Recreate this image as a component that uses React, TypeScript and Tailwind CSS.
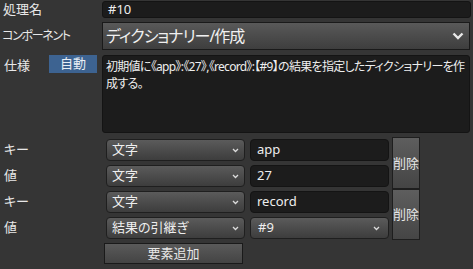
import { ReactNode } from 'react';

const font = { fontFamily: '"Noto Sans", "Noto Sans CJK JP", sans-serif' };

function Chevron({ big = false }: { big?: boolean }) {
  return big ? (
    <svg width="12" height="8" viewBox="0 0 12 8" className="shrink-0">
      <polyline points="1.5,1.5 6,6 10.5,1.5" fill="none" stroke="#e8e8e8" strokeWidth="2.4" />
    </svg>
  ) : (
    <svg width="7" height="5" viewBox="0 0 7 5" className="shrink-0">
      <polyline points="1,1 3.5,3.5 6,1" fill="none" stroke="#dcdcdc" strokeWidth="1.3" />
    </svg>
  );
}

function Select({ children, className = '' }: { children: ReactNode; className?: string }) {
  return (
    <div
      className={`flex items-center justify-between h-[22px] rounded-[4px] border border-[#1f1f1f] bg-gradient-to-b from-[#5b5b5b] to-[#3d3d3d] pl-[5px] pr-[5px] text-[13px] text-[#eeeeee] ${className}`}
    >
      <span>{children}</span>
      <Chevron />
    </div>
  );
}

function Field({ children }: { children: ReactNode }) {
  return (
    <div className="flex items-center h-[22px] w-[139px] ml-[5px] rounded-[4px] border border-[#141414] bg-[#1c1c1c] pl-[6px] text-[13px] text-[#eeeeee]">
      {children}
    </div>
  );
}

function Row({ label, type, value }: { label: string; type: string; value: ReactNode }) {
  return (
    <div className="flex items-center h-[22px]">
      <div className="w-[106px] pl-[4px] text-[13px] text-[#e8e8e8]">{label}</div>
      <Select className="w-[139px]">{type}</Select>
      {value}
    </div>
  );
}

function DeleteButton() {
  return (
    <button className="ml-[3px] w-[28px] h-full border border-[#1e1e1e] bg-gradient-to-b from-[#5e5e5e] to-[#454545] text-[13px] text-[#e6e6e6] leading-none">
      削除
    </button>
  );
}

export default function App() {
  return (
    <div
      className="w-[473px] h-[269px] bg-[#353535] overflow-hidden pt-[1px] [font-feature-settings:'palt']"
      style={font}
    >
      {/* 処理名 */}
      <div className="flex items-center h-[17px]">
        <div className="w-[102px] pl-[3px] text-[13px] text-[#e8e8e8]">処理名</div>
        <div className="flex items-center h-full w-[369px] rounded-[3px] border border-[#141414] bg-[#1c1c1c] pl-[5px] text-[13px] text-[#eeeeee]">
          #10
        </div>
      </div>

      {/* コンポーネント */}
      <div className="flex items-center h-[28px] mt-[4px]">
        <div className="w-[102px] pl-[2px] text-[12px] tracking-[-1.3px] text-[#e8e8e8]">コンポーネント</div>
        <div className="flex items-center justify-between h-full w-[368px] border border-[#1a1a1a] bg-gradient-to-b from-[#595959] to-[#3e3e3e] pl-[3px] pr-[5px] text-[16px] tracking-[-1px] text-[#f0f0f0]">
          <span>ディクショナリー/作成</span>
          <Chevron big />
        </div>
      </div>

      {/* 仕様 */}
      <div className="flex items-start mt-[5px]">
        <div className="w-[49px] pl-[4px] pt-[1px] text-[13px] text-[#e8e8e8]">仕様</div>
        <div className="w-[48px] h-[18px] flex items-center justify-center bg-[#3d6391] text-[13px] text-[#e8eef5]">自動</div>
        <div className="ml-[5px] w-[368px] h-[78px] rounded-[3px] border border-[#141414] bg-[#1c1c1c] px-[3px] pt-[2px] text-[12px] leading-[17px] tracking-[-0.7px] text-[#eeeeee]">
          初期値に《app》:《27》,《record》:【#9】の結果を指定したディクショナリーを作成する。
        </div>
      </div>

      {/* キー / 値 */}
      <div className="flex h-[52px] mt-[4px]">
        <div className="flex flex-col pt-[2px] gap-[4px]">
          <Row label="キー" type="文字" value={<Field>app</Field>} />
          <Row label="値" type="文字" value={<Field>27</Field>} />
        </div>
        <DeleteButton />
      </div>
      <div className="flex h-[51px]">
        <div className="flex flex-col pt-[2px] gap-[4px]">
          <Row label="キー" type="文字" value={<Field>record</Field>} />
          <Row
            label="値"
            type="結果の引継ぎ"
            value={<Select className="w-[139px] ml-[5px] pl-[7px] pr-[8px]">#9</Select>}
          />
        </div>
        <DeleteButton />
      </div>

      <div className="pl-[104px]">
        <button className="w-[139px] h-[21px] border border-[#1a1a1a] bg-gradient-to-b from-[#5a5a5a] to-[#444444] text-[13px] text-[#e8e8e8] leading-none">
          要素追加
        </button>
      </div>
    </div>
  );
}
